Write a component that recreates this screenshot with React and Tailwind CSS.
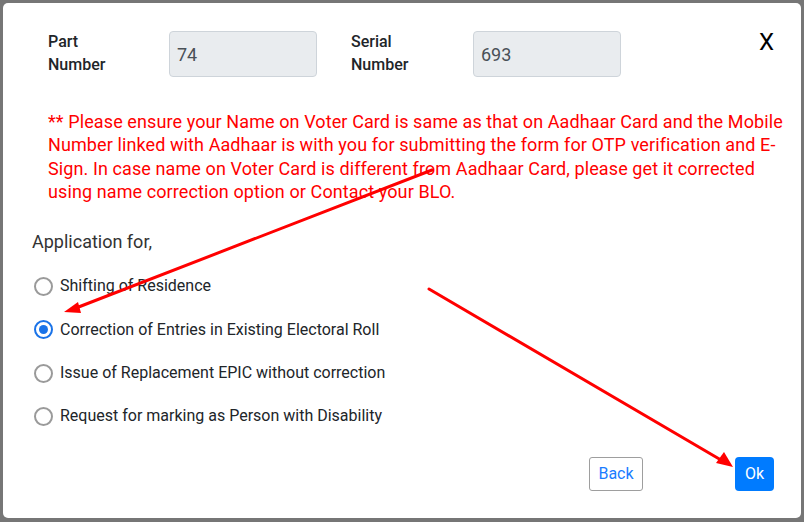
import React from "react";

const font = { fontFamily: "Roboto, 'Liberation Sans', sans-serif" };

function Radio({ checked, label }) {
  return (
    <div className="flex items-center h-[43.4px] gap-[7px]">
      {checked ? (
        <span className="w-[19px] h-[19px] rounded-full border-2 border-[#1a73e8] flex items-center justify-center">
          <span className="w-[9px] h-[9px] rounded-full bg-[#1a73e8]" />
        </span>
      ) : (
        <span className="w-[19px] h-[19px] rounded-full border-2 border-[#9a9a9a]" />
      )}
      <span className="text-[16px] text-[#212529]">{label}</span>
    </div>
  );
}

export default function App() {
  return (
    <div className="w-[804px] h-[522px] bg-[#767676] pt-[3px] pl-[3px] pr-[3px] pb-[4px]" style={font}>
      <div className="relative w-full h-full bg-white rounded-[5px] overflow-hidden">
        <div className="flex items-center mt-[28px] pl-[45px] pr-[27px]">
          <div className="w-[121px] text-[16px] font-medium leading-[23px] text-[#212529] -mt-[2px]">
            Part
            <br />
            Number
          </div>
          <div className="w-[148px] h-[46px] bg-[#e9ecef] border border-[#ced4da] rounded-[4px] flex items-center pl-[7px] pt-[1px] text-[18px] text-[#495057]">
            74
          </div>
          <div className="w-[122px] ml-[34px] text-[16px] font-medium leading-[23px] text-[#212529] -mt-[2px]">
            Serial
            <br />
            Number
          </div>
          <div className="w-[148px] h-[46px] bg-[#e9ecef] border border-[#ced4da] rounded-[4px] flex items-center pl-[7px] pt-[1px] text-[18px] text-[#495057]">
            693
          </div>
          <div className="flex-1 flex justify-end self-start -mt-[4px]">
            <span className="text-[24px] leading-[30px] text-black">X</span>
          </div>
        </div>

        <p className="mt-[33px] ml-[45px] w-[742px] text-[18px] leading-[23.4px] tracking-[0.1px] text-[#ff0000]">
          ** Please ensure your Name on Voter Card is same as that on Aadhaar Card and the Mobile Number linked with Aadhaar is with you for submitting the form for OTP verification and E-Sign. In case name on Voter Card is different from Aadhaar Card, please get it corrected using name correction option or Contact your BLO.
        </p>

        <div className="mt-[24px] ml-[29px] text-[18px] leading-[27px] text-[#333333]">Application for,</div>

        <div className="mt-[10px] ml-[31px]">
          <Radio label="Shifting of Residence" />
          <Radio checked label="Correction of Entries in Existing Electoral Roll" />
          <Radio label="Issue of Replacement EPIC without correction" />
          <Radio label="Request for marking as Person with Disability" />
        </div>

        <div className="mt-[19px] flex justify-end gap-[92px] pr-[27px]">
          <button className="w-[54px] h-[34px] border border-[#9e9e9e] rounded-[3px] text-[16px] text-[#1a7cff] bg-white">
            Back
          </button>
          <button className="w-[39px] h-[34px] rounded-[4px] text-[16px] text-white bg-[#007bff]">
            Ok
          </button>
        </div>

        <svg className="absolute left-[-3px] top-[-3px] pointer-events-none" width="804" height="522" viewBox="0 0 804 522">
          <line x1="432" y1="170" x2="76" y2="308" stroke="#ff0000" strokeWidth="3" strokeLinecap="round" />
          <polygon points="64,312 78,302 81,313" fill="#ff0000" />
          <line x1="429" y1="289" x2="721" y2="460" stroke="#ff0000" strokeWidth="3" strokeLinecap="round" />
          <polygon points="733,467 716,463 724,452" fill="#ff0000" />
        </svg>
      </div>
    </div>
  );
}
